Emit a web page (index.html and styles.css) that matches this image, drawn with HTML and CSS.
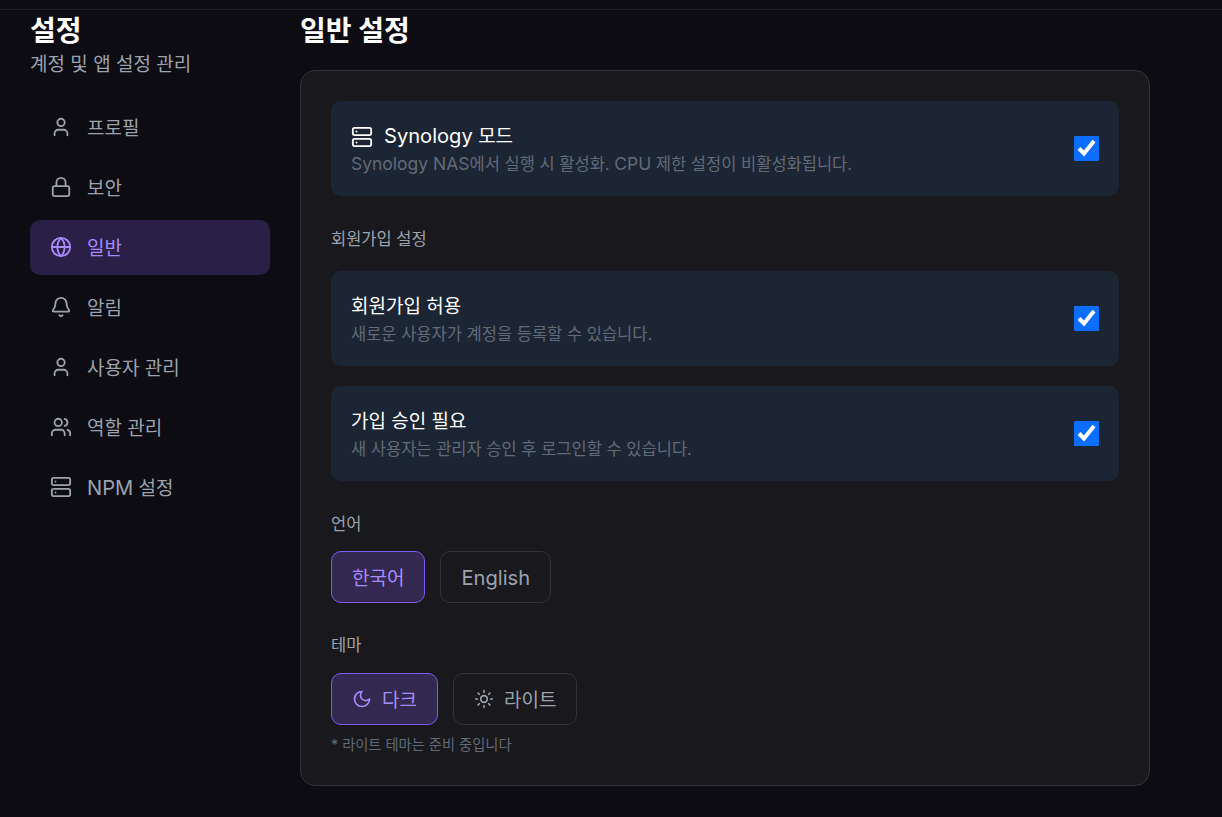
FILE: index.html
```html
<!DOCTYPE html>
<html lang="ko">
<head>
    <meta charset="UTF-8">
    <meta name="viewport" content="width=device-width, initial-scale=1.0">
    <title>설정</title>
    <link rel="stylesheet" href="styles.css">
</head>
<body>
    <div class="topbar"></div>

    <div class="layout">
        <aside class="sidebar">
            <h1>설정</h1>
            <p class="subtitle">계정 및 앱 설정 관리</p>
            <nav class="nav">
                <a class="nav-item">
                    <svg class="icon" viewBox="0 0 24 24"><path d="M19 21v-2a4 4 0 0 0-4-4H9a4 4 0 0 0-4 4v2"/><circle cx="12" cy="7" r="4"/></svg>
                    <span>프로필</span>
                </a>
                <a class="nav-item">
                    <svg class="icon" viewBox="0 0 24 24"><rect x="3" y="11" width="18" height="11" rx="2"/><path d="M7 11V7a5 5 0 0 1 10 0v4"/></svg>
                    <span>보안</span>
                </a>
                <a class="nav-item active">
                    <svg class="icon" viewBox="0 0 24 24"><circle cx="12" cy="12" r="10"/><path d="M12 2a14.5 14.5 0 0 0 0 20 14.5 14.5 0 0 0 0-20"/><path d="M2 12h20"/></svg>
                    <span>일반</span>
                </a>
                <a class="nav-item">
                    <svg class="icon" viewBox="0 0 24 24"><path d="M10.268 21a2 2 0 0 0 3.464 0"/><path d="M3.262 15.326A1 1 0 0 0 4 17h16a1 1 0 0 0 .74-1.673C19.41 13.956 18 12.499 18 8A6 6 0 0 0 6 8c0 4.499-1.411 5.956-2.738 7.326"/></svg>
                    <span>알림</span>
                </a>
                <a class="nav-item">
                    <svg class="icon" viewBox="0 0 24 24"><path d="M19 21v-2a4 4 0 0 0-4-4H9a4 4 0 0 0-4 4v2"/><circle cx="12" cy="7" r="4"/></svg>
                    <span>사용자 관리</span>
                </a>
                <a class="nav-item">
                    <svg class="icon" viewBox="0 0 24 24"><path d="M16 21v-2a4 4 0 0 0-4-4H6a4 4 0 0 0-4 4v2"/><circle cx="9" cy="7" r="4"/><path d="M22 21v-2a4 4 0 0 0-3-3.87"/><path d="M16 3.13a4 4 0 0 1 0 7.75"/></svg>
                    <span>역할 관리</span>
                </a>
                <a class="nav-item">
                    <svg class="icon" viewBox="0 0 24 24"><rect x="2" y="2" width="20" height="8" rx="2"/><rect x="2" y="14" width="20" height="8" rx="2"/><path d="M6 6h.01"/><path d="M6 18h.01"/></svg>
                    <span><span class="latin">NPM</span> 설정</span>
                </a>
            </nav>
        </aside>

        <main class="content">
            <h2>일반 설정</h2>
            <section class="card">
                <div class="option">
                    <div class="option-text">
                        <div class="option-title">
                            <svg class="icon" viewBox="0 0 24 24"><rect x="2" y="2" width="20" height="8" rx="2"/><rect x="2" y="14" width="20" height="8" rx="2"/><path d="M6 6h.01"/><path d="M6 18h.01"/></svg>
                            <span><span class="latin">Synology</span> 모드</span>
                        </div>
                        <div class="option-desc"><span class="latin">Synology NAS</span>에서 실행 시 활성화. <span class="latin">CPU</span> 제한 설정이 비활성화됩니다.</div>
                    </div>
                    <input type="checkbox" class="check" checked>
                </div>

                <div class="group-label signup-label">회원가입 설정</div>
                <div class="option">
                    <div class="option-text">
                        <div class="option-title">회원가입 허용</div>
                        <div class="option-desc">새로운 사용자가 계정을 등록할 수 있습니다.</div>
                    </div>
                    <input type="checkbox" class="check" checked>
                </div>
                <div class="option option-next">
                    <div class="option-text">
                        <div class="option-title">가입 승인 필요</div>
                        <div class="option-desc">새 사용자는 관리자 승인 후 로그인할 수 있습니다.</div>
                    </div>
                    <input type="checkbox" class="check" checked>
                </div>

                <div class="group-label lang-label">언어</div>
                <div class="choices">
                    <button class="choice selected">한국어</button>
                    <button class="choice english"><span class="latin">English</span></button>
                </div>

                <div class="group-label theme-label">테마</div>
                <div class="choices">
                    <button class="choice selected">
                        <svg class="icon small" viewBox="0 0 24 24"><path d="M12 3a6 6 0 0 0 9 9 9 9 0 1 1-9-9Z"/></svg>
                        다크
                    </button>
                    <button class="choice">
                        <svg class="icon small" viewBox="0 0 24 24"><circle cx="12" cy="12" r="4"/><path d="M12 2v2"/><path d="M12 20v2"/><path d="m4.93 4.93 1.41 1.41"/><path d="m17.66 17.66 1.41 1.41"/><path d="M2 12h2"/><path d="M20 12h2"/><path d="m6.34 17.66-1.41 1.41"/><path d="m19.07 4.93-1.41 1.41"/></svg>
                        라이트
                    </button>
                </div>
                <p class="note">* 라이트 테마는 준비 중입니다</p>
            </section>
        </main>
    </div>
</body>
</html>
```

FILE: styles.css
```css
* {
    box-sizing: border-box;
}

html, body {
    height: 100%;
}

body {
    margin: 0;
    overflow: hidden;
    background-color: #0c0c12;
    color: #9ca3af;
    font-family: Inter, "Noto Sans CJK KR", sans-serif;
    font-optical-sizing: none;
}

.topbar {
    height: 10px;
    border-bottom: 1px solid #1d1d24;
}

.layout {
    display: flex;
    gap: 30px;
    padding: 0 30px;
}

.sidebar {
    width: 240px;
    flex-shrink: 0;
}

h1, h2 {
    margin: 0;
    color: #fff;
    font-size: 28px;
    font-weight: 700;
    line-height: 42px;
}

.subtitle {
    margin: 0;
    font-size: 19px;
    line-height: 26px;
}

.latin {
    font-size: 1.06em;
}

.nav {
    display: flex;
    flex-direction: column;
    gap: 5px;
    margin-top: 22px;
}

.nav-item {
    display: flex;
    align-items: center;
    gap: 15px;
    height: 55px;
    padding: 0 20px 2px;
    border-radius: 10px;
    font-size: 19px;
}

.nav-item.active {
    background-color: #2a1f47;
    color: #a78bfa;
}

.icon {
    width: 22px;
    height: 22px;
    flex-shrink: 0;
    fill: none;
    stroke: currentColor;
    stroke-width: 2;
    stroke-linecap: round;
    stroke-linejoin: round;
}

.icon.small {
    width: 20px;
    height: 20px;
}

.content {
    width: 850px;
}

.card {
    margin-top: 18px;
    height: 716px;
    padding: 30px;
    background-color: #19191d;
    border: 1px solid #333338;
    border-radius: 15px;
}

.option {
    display: flex;
    align-items: center;
    justify-content: space-between;
    height: 95px;
    padding: 0 20px;
    background-color: #1c2533;
    border-radius: 10px;
}

.option-next {
    margin-top: 20px;
}

.option-text {
    margin-top: 2px;
}

.option-title {
    display: flex;
    align-items: center;
    gap: 11px;
    color: #fff;
    font-size: 19px;
    line-height: 26px;
}

.option-desc {
    margin-top: 2px;
    color: #636a78;
    font-size: 16.5px;
    line-height: 24px;
}

.check {
    width: 25px;
    height: 25px;
    margin: 0;
    accent-color: #0b6eff;
}

.group-label {
    font-size: 16.5px;
    line-height: 24px;
}

.signup-label {
    margin: 31px 0 20px;
}

.lang-label {
    margin: 31px 0 15px;
}

.theme-label {
    margin: 30px 0 16px;
}

.choices {
    display: flex;
    gap: 15px;
}

.choice {
    display: flex;
    align-items: center;
    gap: 10px;
    height: 52px;
    padding: 0 20px 2px;
    background: transparent;
    border: 1px solid #333338;
    border-radius: 10px;
    color: #9ca3af;
    font-family: inherit;
    font-size: 19px;
}

.choice.english {
    padding-bottom: 0;
}

.choice .icon {
    margin-top: 2px;
}

.choice.selected {
    background-color: #322850;
    border-color: #7c5cf0;
    color: #a78bfa;
}

.note {
    margin: 10px 0 0;
    color: #636a78;
    font-size: 14.25px;
    line-height: 20px;
}
```
